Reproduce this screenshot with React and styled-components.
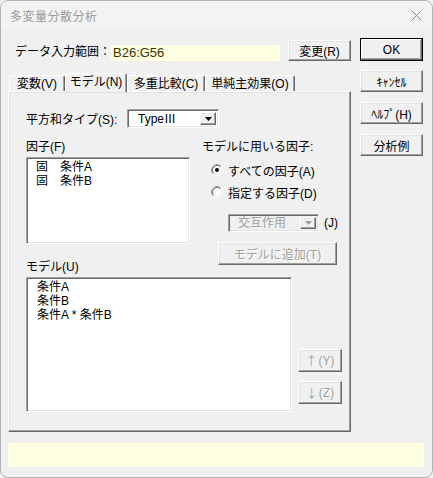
import React from "react";
import styled, { createGlobalStyle, css } from "styled-components";

const Global = createGlobalStyle`
  html, body { margin: 0; padding: 0; background: #f0f0f0; }
  body { width: 433px; height: 478px; overflow: hidden; }
  * { box-sizing: border-box; }
`;

const FONT = `"Liberation Sans", "Noto Sans CJK JP", sans-serif`;

const raised = css`
  border-top: 1px solid #ffffff;
  border-left: 1px solid #ffffff;
  border-right: 1px solid #696969;
  border-bottom: 1px solid #696969;
  box-shadow: inset -1px -1px 0 #a0a0a0, inset 1px 1px 0 #e3e3e3;
`;

const sunken = css`
  border-top: 1px solid #a0a0a0;
  border-left: 1px solid #a0a0a0;
  border-right: 1px solid #ffffff;
  border-bottom: 1px solid #ffffff;
  box-shadow: inset 1px 1px 0 #696969, inset -1px -1px 0 #e3e3e3;
`;

const Window = styled.div`
  width: 433px;
  height: 478px;
  border: 1px solid #b4b4b4;
  border-radius: 8px;
  background: #f0f0f0;
  font-family: ${FONT};
  font-size: 12px;
  color: #000;
  overflow: hidden;
  display: flex;
  flex-direction: column;
`;

const TitleBar = styled.div`
  height: 29px;
  flex: none;
  display: flex;
  align-items: center;
  justify-content: space-between;
  padding: 0 10px 0 9px;
  background: #f3f3f3;
  border-bottom: 1px solid #ececec;
`;

const Title = styled.span`
  color: #9a9a9a;
  font-size: 12px;
  letter-spacing: 0.5px;
`;

const Content = styled.div`
  padding: 8px 7px 0 7px;
  display: flex;
  flex-direction: column;
`;

const Main = styled.div`
  display: grid;
  grid-template-columns: 343px 63px;
  column-gap: 9px;
`;

const LeftCol = styled.div`
  display: flex;
  flex-direction: column;
  padding-top: 2px;
`;

const RightCol = styled.div`
  display: flex;
  flex-direction: column;
`;

const RangeRow = styled.div`
  height: 21px;
  display: flex;
  align-items: center;
`;

const RangeLabel = styled.span`
  width: 103px;
  padding-left: 7px;
  white-space: nowrap;
`;

const RangeField = styled.div`
  width: 169px;
  height: 16px;
  margin-top: 4px;
  background: #ffffe1;
  color: #3a3100;
  font-size: 13px;
  line-height: 16px;
  padding-left: 2px;
`;

const Button = styled.div`
  ${raised}
  width: ${(p) => p.$w || 63}px;
  height: ${(p) => p.$h || 22}px;
  margin-top: ${(p) => p.$mt || 0}px;
  margin-left: ${(p) => p.$ml || 0}px;
  display: flex;
  align-items: center;
  justify-content: center;
  background: #f0f0f0;
  white-space: nowrap;
  ${(p) =>
    p.$default &&
    css`
      border: 1px solid #000;
      box-shadow: inset -1px -1px 0 #696969, inset 1px 1px 0 #ffffff,
        inset -2px -2px 0 #a0a0a0;
    `}
  ${(p) =>
    p.$disabled &&
    css`
      color: #a0a0a0;
      text-shadow: 1px 1px 0 #ffffff;
    `}
`;

const ArrowGlyph = styled.span`
  font-family: "Noto Sans CJK JP", sans-serif;
  font-size: 12px;
  line-height: 14px;
  margin-right: 1px;
`;

const TabStrip = styled.div`
  margin-top: 12px;
  height: 18px;
  display: flex;
  align-items: flex-end;
  padding-left: 1px;
  position: relative;
  z-index: 1;
`;

const Tab = styled.div`
  width: ${(p) => p.$w}px;
  height: ${(p) => (p.$active ? 19 : 16)}px;
  margin-bottom: ${(p) => (p.$active ? -1 : 0)}px;
  border-top: 1px solid #ffffff;
  border-left: 1px solid #ffffff;
  border-right: 1px solid #696969;
  border-radius: 2px 2px 0 0;
  box-shadow: inset -1px 0 0 #a0a0a0;
  background: #f0f0f0;
  display: flex;
  align-items: ${(p) => (p.$active ? "flex-start" : "center")};
  justify-content: center;
  line-height: 16px;
  white-space: nowrap;
`;

const Panel = styled.div`
  ${raised}
  width: 343px;
  height: 341px;
  padding: 17px 0 0 17px;
  display: flex;
  flex-direction: column;
`;

const SumRow = styled.div`
  height: 19px;
  display: flex;
  align-items: center;
`;

const SumLabel = styled.span`
  width: 101px;
  white-space: nowrap;
`;

const Select = styled.div`
  ${sunken}
  width: ${(p) => p.$w}px;
  height: ${(p) => p.$h}px;
  background: ${(p) => (p.$disabled ? "#f0f0f0" : "#ffffff")};
  color: ${(p) => (p.$disabled ? "#a0a0a0" : "#000")};
  display: flex;
  align-items: center;
  padding: 2px 2px 2px ${(p) => p.$pl}px;
`;

const SelectText = styled.span`
  flex: 1;
  line-height: 14px;
`;

const DropButton = styled.div`
  ${raised}
  width: 16px;
  height: 100%;
  display: flex;
  align-items: center;
  justify-content: center;
  background: #f0f0f0;
`;

const FactorGrid = styled.div`
  margin-top: 12px;
  display: grid;
  grid-template-columns: 164px 1fr;
  column-gap: 12px;
  grid-template-rows: auto auto auto auto;
`;

const Label = styled.div`
  height: 14px;
  line-height: 14px;
  white-space: nowrap;
  margin-top: ${(p) => p.$mt || 0}px;
  grid-column: ${(p) => p.$col || "auto"};
  grid-row: ${(p) => p.$row || "auto"};
`;

const ListBox = styled.div`
  ${sunken}
  width: ${(p) => p.$w}px;
  height: ${(p) => p.$h}px;
  margin-top: 3px;
  background: #ffffff;
  padding: 2px 0 0 ${(p) => p.$pl}px;
  grid-column: ${(p) => p.$col || "auto"};
  grid-row: ${(p) => p.$row || "auto"};
`;

const ListItem = styled.div`
  height: 14px;
  line-height: 14px;
  white-space: pre;
`;

const Badge = styled.span`
  display: inline-block;
  width: 24px;
`;

const ChoiceBlock = styled.div`
  grid-column: 2;
  grid-row: 2 / span 2;
  display: flex;
  flex-direction: column;
  align-items: flex-start;
  padding-top: 6px;
`;

const RadioRow = styled.div`
  height: 20px;
  margin-top: ${(p) => p.$mt || 0}px;
  margin-left: 9px;
  display: flex;
  align-items: center;
  gap: 5px;
  white-space: nowrap;
`;

const ComboRow = styled.div`
  margin-top: 12px;
  margin-left: 26px;
  display: flex;
  align-items: center;
  gap: 5px;
`;

const ModelRow = styled.div`
  grid-column: 1 / span 2;
  grid-row: 4;
  display: flex;
  gap: 6px;
`;

const SideButtons = styled.div`
  display: flex;
  flex-direction: column;
  justify-content: flex-end;
  gap: 9px;
  padding-bottom: 8px;
`;

const StatusBar = styled.div`
  margin-top: 11px;
  width: 416px;
  height: 24px;
  background: #ffffe1;
`;

const Radio = ({ checked }) => (
  <svg width="12" height="12" viewBox="0 0 12 12">
    <circle cx="6" cy="6" r="4.5" fill="#ffffff" />
    <path d="M2.11 9.89 A5.5 5.5 0 0 1 9.89 2.11" fill="none" stroke="#a0a0a0" />
    <path d="M9.89 2.11 A5.5 5.5 0 0 1 2.11 9.89" fill="none" stroke="#ffffff" />
    <path d="M2.82 9.18 A4.5 4.5 0 0 1 9.18 2.82" fill="none" stroke="#696969" />
    <path d="M9.18 2.82 A4.5 4.5 0 0 1 2.82 9.18" fill="none" stroke="#e3e3e3" />
    {checked && <circle cx="6" cy="6" r="2" fill="#000000" />}
  </svg>
);

const Arrow = ({ color }) => (
  <svg width="7" height="4" viewBox="0 0 7 4">
    <path d="M0 0 H7 L3.5 4 Z" fill={color} />
  </svg>
);

const CloseIcon = () => (
  <svg width="11" height="11" viewBox="0 0 11 11">
    <path d="M0.5 0.5 L10.5 10.5 M10.5 0.5 L0.5 10.5" stroke="#8a8a8a" strokeWidth="1" />
  </svg>
);

const tabs = [
  { label: "変数(V)", w: 56 },
  { label: "モデル(N)", w: 62, active: true },
  { label: "多重比較(C)", w: 78 },
  { label: "単純主効果(O)", w: 90 },
];

const factors = ["条件A", "条件B"];
const terms = ["条件A", "条件B", "条件A * 条件B"];

export default function App() {
  return (
    <>
      <Global />
      <Window>
        <TitleBar>
          <Title>多変量分散分析</Title>
          <CloseIcon />
        </TitleBar>
        <Content>
          <Main>
            <LeftCol>
              <RangeRow>
                <RangeLabel>データ入力範囲：</RangeLabel>
                <RangeField>B26:G56</RangeField>
                <Button $ml={8} $h={21}>変更(R)</Button>
              </RangeRow>
              <TabStrip>
                {tabs.map((t) => (
                  <Tab key={t.label} $w={t.w} $active={t.active}>
                    {t.label}
                  </Tab>
                ))}
              </TabStrip>
              <Panel>
                <SumRow>
                  <SumLabel>平方和タイプ(S):</SumLabel>
                  <Select $w={92} $h={19} $pl={10}>
                    <SelectText>TypeⅢ</SelectText>
                    <DropButton>
                      <Arrow color="#000" />
                    </DropButton>
                  </Select>
                </SumRow>
                <FactorGrid>
                  <Label $col={1} $row={1}>因子(F)</Label>
                  <Label $col={2} $row={1}>モデルに用いる因子:</Label>
                  <ListBox $w={164} $h={87} $pl={9} $col={1} $row={2}>
                    {factors.map((f) => (
                      <ListItem key={f}>
                        <Badge>固</Badge>
                        {f}
                      </ListItem>
                    ))}
                  </ListBox>
                  <ChoiceBlock>
                    <RadioRow>
                      <Radio checked />
                      すべての因子(A)
                    </RadioRow>
                    <RadioRow $mt={2}>
                      <Radio />
                      指定する因子(D)
                    </RadioRow>
                    <ComboRow>
                      <Select $w={91} $h={18} $pl={9} $disabled>
                        <SelectText>交互作用</SelectText>
                        <DropButton>
                          <Arrow color="#a0a0a0" />
                        </DropButton>
                      </Select>
                      <span>(J)</span>
                    </ComboRow>
                    <Button $w={119} $h={23} $mt={10} $ml={16} $disabled>
                      モデルに追加(T)
                    </Button>
                  </ChoiceBlock>
                  <Label $col={1} $row={3} $mt={16}>モデル(U)</Label>
                  <ModelRow>
                    <ListBox $w={266} $h={135} $pl={10}>
                      {terms.map((t) => (
                        <ListItem key={t}>{t}</ListItem>
                      ))}
                    </ListBox>
                    <SideButtons>
                      <Button $w={44} $h={23} $disabled>
                        <ArrowGlyph>↑</ArrowGlyph>(Y)
                      </Button>
                      <Button $w={44} $h={23} $disabled>
                        <ArrowGlyph>↓</ArrowGlyph>(Z)
                      </Button>
                    </SideButtons>
                  </ModelRow>
                </FactorGrid>
              </Panel>
            </LeftCol>
            <RightCol>
              <Button $default $h={23}>OK</Button>
              <Button $mt={9}>ｷｬﾝｾﾙ</Button>
              <Button $mt={10}>ﾍﾙﾌﾟ(H)</Button>
              <Button $mt={10}>分析例</Button>
            </RightCol>
          </Main>
          <StatusBar />
        </Content>
      </Window>
    </>
  );
}
